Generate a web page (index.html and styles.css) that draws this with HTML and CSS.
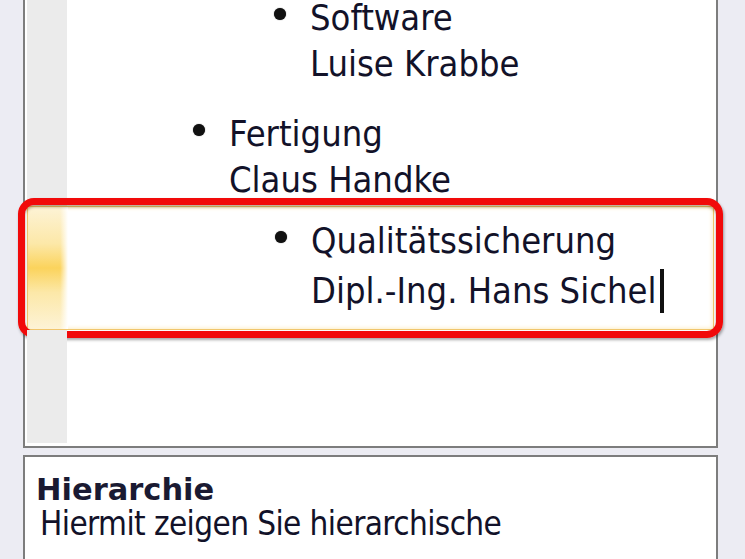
FILE: index.html
```html
<!DOCTYPE html>
<html lang="de">
<head>
<meta charset="utf-8">
<title>SmartArt Textbereich</title>
<link rel="stylesheet" href="styles.css">
</head>
<body>
<div class="upper">
  <div class="list">
    <div class="row">
      <div class="gutter"></div>
      <div class="content level2">
        <span class="bullet"></span>
        <div class="text">
          <div class="line">Software</div>
          <div class="line">Luise Krabbe</div>
        </div>
      </div>
    </div>
    <div class="row">
      <div class="gutter"></div>
      <div class="content level1">
        <span class="bullet"></span>
        <div class="text">
          <div class="line">Fertigung</div>
          <div class="line">Claus Handke</div>
        </div>
      </div>
    </div>
    <div class="row selected">
      <div class="gutter"></div>
      <div class="content level2">
        <span class="bullet"></span>
        <div class="text">
          <div class="line">Qualitätssicherung</div>
          <div class="line">Dipl.-Ing. Hans Sichel<span class="caret"></span></div>
        </div>
      </div>
      <div class="mark"></div>
    </div>
    <div class="row filler">
      <div class="gutter"></div>
      <div class="content"></div>
    </div>
  </div>
</div>
<div class="lower">
  <div class="title">Hierarchie</div>
  <div class="desc">Hiermit zeigen Sie hierarchische</div>
</div>
</body>
</html>
```
FILE: styles.css
```css
html, body {
  margin: 0;
  padding: 0;
}
body {
  width: 745px;
  height: 559px;
  overflow: hidden;
  background: #ececf3;
  font-family: "DejaVu Sans Condensed", "DejaVu Sans", sans-serif;
  font-stretch: condensed;
  color: #121229;
}
.upper {
  box-sizing: border-box;
  margin-left: 23px;
  width: 695px;
  height: 448px;
  background: #fff;
  border: 2px solid #7d7d7d;
  border-top: none;
  padding: 0 2px 3px 2px;
  display: flex;
  flex-direction: column;
}
.list {
  margin-top: -20px;
  flex: 1;
  display: flex;
  flex-direction: column;
}
.row {
  position: relative;
  display: flex;
  border: 1px solid transparent;
  padding: 19px 0 13px 0;
}
.gutter {
  flex: none;
  width: 40px;
  margin: -20px 0 -14px -1px;
  background: #ebebeb;
}
.content {
  flex: 1;
  display: flex;
  align-items: flex-start;
}
.level1 { padding-left: 126px; }
.level2 { padding-left: 207px; }
.bullet {
  flex: none;
  width: 12px;
  height: 12px;
  margin-top: 8px;
  margin-right: 24px;
  border-radius: 50%;
  background: #111;
  box-shadow: 0 0 1px #333;
}
.text {
  font-size: 36px;
  line-height: 36px;
  white-space: nowrap;
}
.line + .line {
  margin-top: 10px;
}
.selected {
  margin-top: -6px;
  padding: 16px 0 16px 0;
  border-color: #f1c66c;
  box-shadow: inset 0 0 5px #fbe7b0;
  background: #fff;
}
.selected .gutter {
  margin: -16px 0 -16px 0;
  background: linear-gradient(to right, rgba(255,255,255,0) 80%, #fff 100%),
              linear-gradient(to bottom, #fdf3d6 0%, #fce8a8 30%, #fbd35c 50%, #fce8a8 70%, #fdf3d6 100%);
}
.filler {
  flex: 1;
  padding: 0;
}
.filler .gutter {
  margin: -1px 0 -1px -1px;
}
.caret {
  display: inline-block;
  width: 4px;
  height: 44px;
  margin-left: 4px;
  vertical-align: -10px;
  background: #111;
}
.mark {
  position: absolute;
  top: -9px;
  left: -10px;
  right: -10px;
  bottom: -9px;
  border: 7px solid #f10a0a;
  border-radius: 16px;
  box-shadow: 1px 2px 3px rgba(0,0,0,0.35), inset 0 2px 3px rgba(90,60,0,0.45);
  pointer-events: none;
}
.lower {
  box-sizing: border-box;
  margin-top: 7px;
  margin-left: 23px;
  width: 695px;
  height: 120px;
  background: #fff;
  border: 2px solid #7d7d7d;
  border-bottom: none;
  padding: 16px 0 0 11px;
}
.title {
  font-family: "DejaVu Sans", sans-serif;
  font-stretch: normal;
  font-weight: bold;
  font-size: 30.5px;
  line-height: 33px;
  color: #1a1a32;
}
.desc {
  font-size: 33px;
  line-height: 36px;
  letter-spacing: -0.6px;
  padding-left: 4px;
  white-space: nowrap;
}
```
